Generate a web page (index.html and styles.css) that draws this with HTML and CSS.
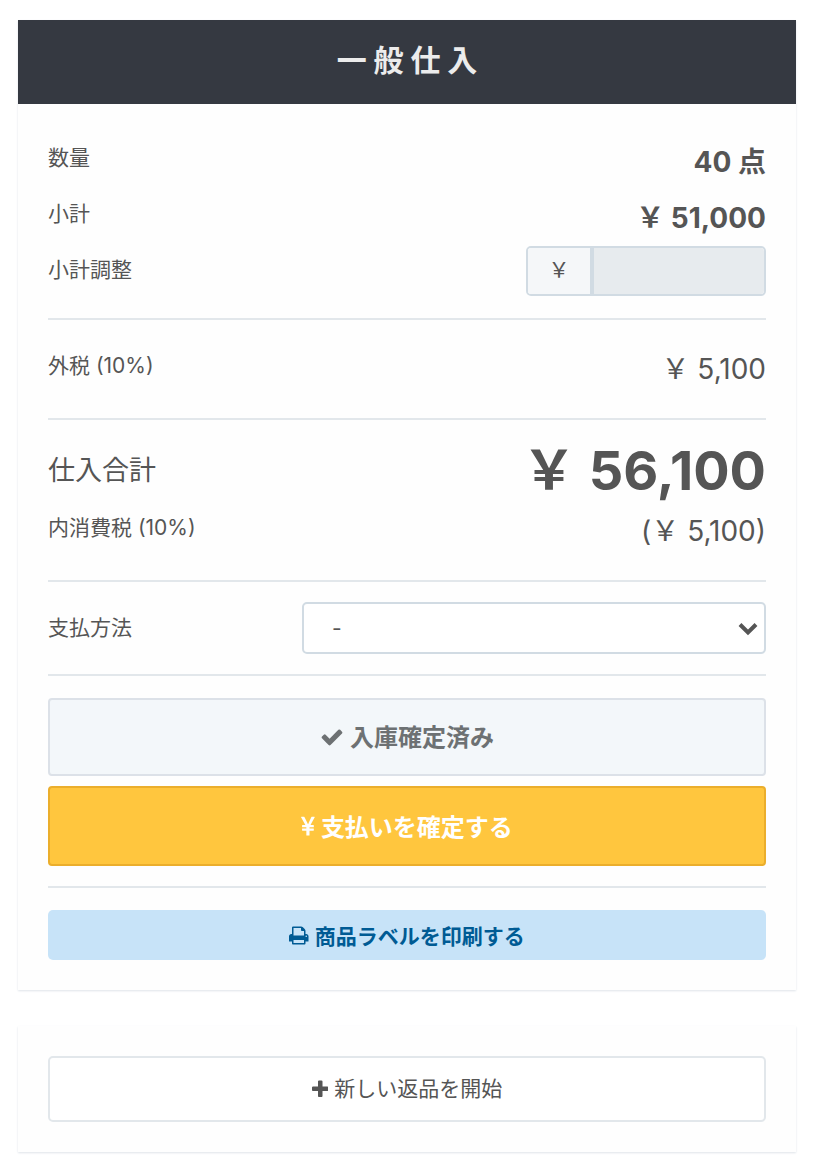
FILE: index.html
```html
<!DOCTYPE html>
<html lang="ja">
<head>
<meta charset="utf-8">
<meta name="viewport" content="width=device-width, initial-scale=1">
<title>一般仕入</title>
<link rel="stylesheet" href="styles.css">
</head>
<body>
<main class="page">
  <section class="card">
    <h1 class="card-title">一 般 仕 入</h1>
    <div class="card-body">
      <div class="group">
        <div class="row"><span class="label">数量</span><span class="value strong">40 点</span></div>
        <div class="row"><span class="label">小計</span><span class="value strong">&#65509; 51,000</span></div>
        <div class="row">
          <label class="label" for="adjust">小計調整</label>
          <div class="input-group">
            <span class="addon">&#65509;</span>
            <input class="input" id="adjust" type="text" disabled>
          </div>
        </div>
      </div>
      <div class="group">
        <div class="row"><span class="label">外税 (10%)</span><span class="value">&#65509; 5,100</span></div>
      </div>
      <div class="group">
        <div class="row total"><span class="total-label">仕入合計</span><span class="total-value">&#65509; 56,100</span></div>
        <div class="row"><span class="label">内消費税 (10%)</span><span class="value">(&#65509; 5,100)</span></div>
      </div>
      <div class="group payment">
        <label class="label" for="method">支払方法</label>
        <div class="select-wrap">
          <select class="select" id="method"><option>-</option></select>
          <svg class="chevron" viewBox="0 0 20 14" aria-hidden="true"><path d="M2 2.500 10 10.500 18 2.500" fill="none" stroke="currentColor" stroke-width="4"/></svg>
        </div>
      </div>
      <div class="group actions">
        <button class="btn btn-done" type="button" disabled>
          <svg class="icon" viewBox="0 0 1792 1792" aria-hidden="true"><path d="M1671 566q0 40-28 68l-724 724-136 136q-28 28-68 28t-68-28l-136-136-362-362q-28-28-28-68t28-68l136-136q28-28 68-28t68 28l294 295 656-657q28-28 68-28t68 28l136 136q28 28 28 68z"/></svg>
          <span class="btn-text">入庫確定済み</span>
        </button>
        <button class="btn btn-pay" type="button">
          <svg class="icon" viewBox="382 0 1027 1792" aria-hidden="true"><path d="M985.500 1536h-172q-13 0-22.500-9t-9.500-23v-330h-288q-13 0-22.500-9t-9.500-23v-103q0-13 9.500-22.500t22.500-9.500h288v-85h-288q-13 0-22.500-9t-9.500-23v-104q0-13 9.500-22.500t22.500-9.500h214l-321-578q-8-16 0-32 10-16 28-16h194q19 0 29 18l215 425q19 38 56 125 10-24 30.500-68t27.500-61l191-420q8-19 29-19h191q17 0 27 16 9 14 1 31l-313 579h215q13 0 22.500 9.500t9.500 22.500v104q0 14-9.500 23t-22.500 9h-290v85h290q13 0 22.500 9.500t9.500 22.500v103q0 14-9.500 23t-22.500 9h-290v330q0 13-9.500 22.500t-22.500 9.500z"/></svg>
          <span class="btn-text">支払いを確定する</span>
        </button>
      </div>
      <div class="group print">
        <button class="btn btn-print" type="button">
          <svg class="icon" viewBox="64 0 1664 1792" aria-hidden="true"><path d="M448 1536h896v-256h-896v256zm0-640h896v-384h-160q-40 0-68-28t-28-68v-160h-640v640zm1152 64q0-26-19-45t-45-19-45 19-19 45 19 45 45 19 45-19 19-45zm128 0v416q0 13-9.500 22.500t-22.500 9.500h-224v160q0 40-28 68t-68 28h-960q-40 0-68-28t-28-68v-160h-224q-13 0-22.500-9.500t-9.500-22.500v-416q0-79 56.500-135.500t135.500-56.500h64v-544q0-40 28-68t68-28h672q40 0 88 20t76 48l152 152q28 28 48 76t20 88v256h64q79 0 135.500 56.500t56.500 135.500z"/></svg>
          <span>商品ラベルを印刷する</span>
        </button>
      </div>
    </div>
  </section>
  <section class="card">
    <div class="card-body card-body-plain">
      <button class="btn btn-new" type="button">
        <svg class="icon" viewBox="192 0 1408 1792" aria-hidden="true"><path d="M1600 736v192q0 40-28 68t-68 28h-416v416q0 40-28 68t-68 28h-192q-40 0-68-28t-28-68v-416h-416q-40 0-68-28t-28-68v-192q0-40 28-68t68-28h416v-416q0-40 28-68t68-28h192q40 0 68 28t28 68v416h416q40 0 68 28t28 68z"/></svg>
        <span class="btn-text">新しい返品を開始</span>
      </button>
    </div>
  </section>
</main>
</body>
</html>
```
FILE: styles.css
```css
* {
  box-sizing: border-box;
}

body {
  margin: 0;
  background: #fff;
  color: #555;
  font-family: Inter, "Noto Sans CJK JP", sans-serif;
  font-size: 21px;
}

.page {
  display: flex;
  flex-direction: column;
  gap: 36px;
  padding: 20px 18px 8px;
}

.card {
  background: #fefefe;
  box-shadow: 0 1px 2px #dfe4ea;
}

.card-title {
  margin: 0;
  padding-bottom: 8px;
  background: #353941;
  color: #ececec;
  font-family: "Noto Sans CJK JP", sans-serif;
  font-size: 30px;
  font-weight: 700;
  line-height: 76px;
  text-align: center;
}

.card-body {
  padding: 8px 30px 30px;
}

.card-body-plain {
  padding-top: 30px;
}

.group {
  padding: 22px 0;
}

.group + .group {
  border-top: 2px solid #e2e7eb;
}

.row {
  display: flex;
  justify-content: space-between;
  align-items: flex-start;
}

.label {
  line-height: 48px;
}

.value {
  font-size: 28px;
  line-height: 54px;
}

.strong {
  font-weight: 700;
  line-height: 56px;
}

.total {
  align-items: center;
  margin-bottom: 4px;
}

.total-label {
  padding-bottom: 6px;
  font-size: 27px;
}

.total-value {
  font-size: 54px;
  font-weight: 700;
  line-height: 58px;
}

.input-group {
  display: flex;
  width: 240px;
  height: 50px;
  border: 2px solid #d1dbe3;
  border-radius: 5px;
  overflow: hidden;
}

.addon {
  flex: 0 0 62px;
  background: #f5f7f9;
  line-height: 44px;
  text-align: center;
}

.input {
  flex: 1;
  min-width: 0;
  padding: 0 12px;
  border: 0;
  border-left: 4px solid #d1dbe3;
  background: #e7ebee;
  font: inherit;
}

.payment {
  display: flex;
  justify-content: space-between;
  align-items: center;
  padding: 20px 0;
}

.select-wrap {
  position: relative;
  flex: 0 0 464px;
}

.select {
  display: block;
  width: 100%;
  height: 52px;
  padding: 0 40px 0 28px;
  border: 2px solid #d1dbe3;
  border-radius: 5px;
  background: #fff;
  color: #555;
  font: inherit;
  appearance: none;
}

.chevron {
  position: absolute;
  top: 20px;
  right: 8px;
  width: 20px;
  height: 14px;
  pointer-events: none;
}

.actions {
  display: grid;
  gap: 10px;
  padding-bottom: 20px;
}

.print {
  padding-bottom: 0;
}

.btn {
  display: flex;
  justify-content: center;
  align-items: center;
  gap: 6px;
  width: 100%;
  padding: 0;
  border: 2px solid;
  border-radius: 4px;
  font: inherit;
  font-weight: 700;
}

.btn-text {
  padding-bottom: 4px;
}

.icon {
  height: 24px;
  fill: currentColor;
}

.btn-done {
  height: 78px;
  border-color: #dce1e8;
  background: #f3f7fa;
  color: #6d7173;
  font-size: 24px;
}

.btn-pay {
  height: 80px;
  padding-top: 2px;
  border-color: #ebae2c;
  background: #ffc63e;
  color: #fff;
  font-size: 24px;
}

.btn-print {
  height: 50px;
  border: 0;
  border-radius: 5px;
  background: #c7e3f8;
  color: #005b94;
}

.btn-new {
  height: 66px;
  border-color: #e2e7eb;
  border-radius: 5px;
  background: #fff;
  color: #555;
  font-weight: 400;
}

.btn-print .icon,
.btn-new .icon {
  height: 21px;
}
```
